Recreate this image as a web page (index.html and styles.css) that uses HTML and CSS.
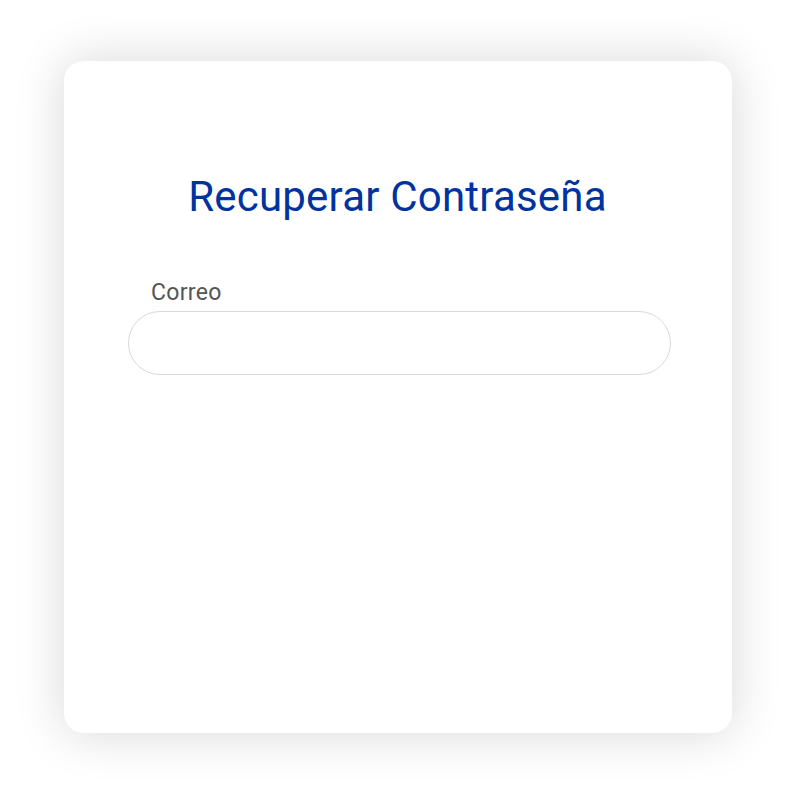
FILE: index.html
```html
<!DOCTYPE html>
<html lang="es">
<head>
<meta charset="utf-8">
<title>Recuperar Contraseña</title>
<link rel="stylesheet" href="styles.css">
</head>
<body>
<div class="page">
  <div class="card">
    <h1 class="title">Recuperar Contraseña</h1>
    <form class="form">
      <label class="label" for="correo">Correo</label>
      <input class="input" id="correo" type="email">
    </form>
  </div>
</div>
</body>
</html>
```
FILE: styles.css
```css
html, body {
  margin: 0;
  padding: 0;
  background: #ffffff;
}
.page {
  padding: 61px 64px 63px 64px;
  font-family: Roboto, "Noto Sans", sans-serif;
}
.card {
  height: 672px;
  box-sizing: border-box;
  background: #ffffff;
  border-radius: 20px;
  box-shadow: 0 0 50px rgba(0, 0, 0, 0.16);
  padding: 108px 61px 0 64px;
}
.title {
  margin: 0;
  padding-right: 4px;
  text-align: center;
  color: #0033a0;
  font-size: 42px;
  font-weight: 400;
  line-height: 56px;
  letter-spacing: 0.2px;
}
.form {
  display: flex;
  flex-direction: column;
  margin-top: 54px;
}
.label {
  color: #555555;
  font-size: 23px;
  line-height: 28px;
  padding-left: 23px;
  margin-bottom: 4px;
  letter-spacing: 0.3px;
}
.input {
  height: 64px;
  box-sizing: border-box;
  border: 1px solid #d9d9d9;
  border-radius: 32px;
  background: #ffffff;
  outline: none;
  font-size: 18px;
  padding: 0 24px;
}
```
